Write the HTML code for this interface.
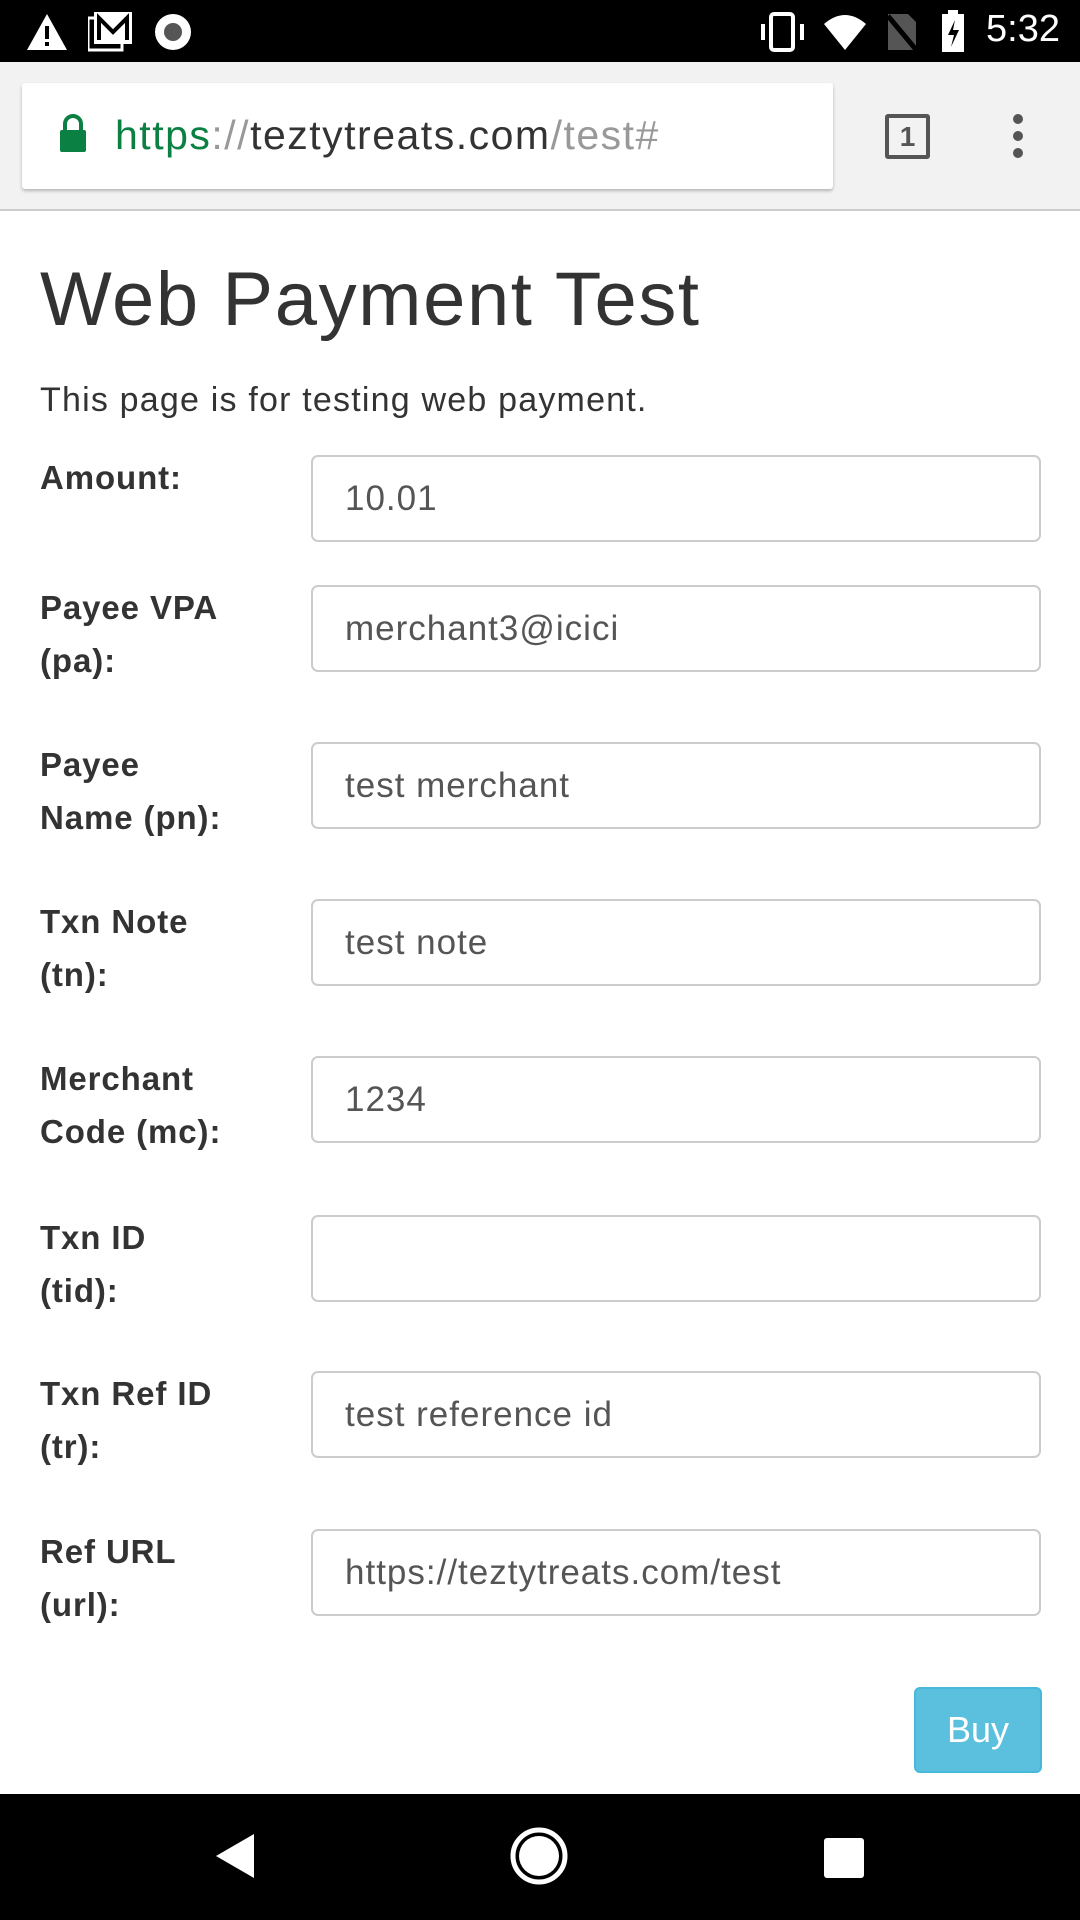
<!DOCTYPE html>
<html><head><meta charset="utf-8"><style>
*{margin:0;padding:0;box-sizing:border-box}
body{width:1080px;height:1920px;background:#fff;font-family:"Liberation Sans",sans-serif;position:relative;overflow:hidden;color:#333}
.abs{position:absolute}
.sb{left:0;top:0;width:1080px;height:62px;background:#000}
.tb{left:0;top:62px;width:1080px;height:149px;background:#f2f2f2;border-bottom:2px solid #ccc}
.url{left:22px;top:83px;width:811px;height:106px;background:#fff;border-radius:3px;box-shadow:0 2px 3px rgba(0,0,0,.25)}
.urltext{left:115px;top:112px;font-size:41px;color:#333;letter-spacing:1.5px}
h1{position:absolute;left:40px;top:256px;font-size:76px;font-weight:normal;color:#333;letter-spacing:1.6px}
.desc{left:40px;top:381px;font-size:34px;letter-spacing:1.2px}
.lab{left:40px;font-size:33px;font-weight:bold;line-height:53px;color:#333;letter-spacing:0.9px}
.inp{left:311px;width:730px;height:87px;border:2px solid #ccc;border-radius:7px;font-size:35px;color:#555;padding-left:32px;line-height:83px;letter-spacing:1px}
.buy{left:914px;top:1687px;width:128px;height:86px;background:#5bc0de;border:2px solid #46b8da;border-radius:6px;color:#fff;font-size:36px;text-align:center;line-height:82px}
.nav{left:0;top:1794px;width:1080px;height:126px;background:#000}
</style></head><body>
<div class="abs sb">
<svg class="abs" style="left:26px;top:12px" width="42" height="40"><polygon points="21,2 41,38 1,38" fill="#fff"/><rect x="19" y="14" width="4" height="13" fill="#000"/><rect x="19" y="30" width="4" height="4" fill="#000"/></svg>
<svg class="abs" style="left:88px;top:10px" width="46" height="42"><rect x="0" y="8" width="34" height="32" fill="none" stroke="#fff" stroke-width="3"/><rect x="6" y="2" width="38" height="32" fill="#fff"/><path d="M11 30V8l14 14 14-14v22" fill="none" stroke="#000" stroke-width="4"/></svg>
<svg class="abs" style="left:153px;top:12px" width="40" height="40"><circle cx="20" cy="20" r="18" fill="#fff"/><circle cx="20" cy="20" r="9" fill="#555"/></svg>
<svg class="abs" style="left:758px;top:12px" width="50" height="40"><rect x="13" y="2" width="22" height="36" rx="3" fill="none" stroke="#fff" stroke-width="4"/><rect x="3" y="12" width="4" height="16" fill="#fff"/><rect x="42" y="12" width="4" height="16" fill="#fff"/></svg>
<svg class="abs" style="left:822px;top:12px" width="46" height="40"><path d="M2 12Q23-6 44 12L23 38Z" fill="#fff"/></svg>
<svg class="abs" style="left:884px;top:12px" width="36" height="40"><path d="M4 2H24L32 10V38H4Z" fill="#555"/><line x1="4" y1="4" x2="34" y2="40" stroke="#000" stroke-width="5"/></svg>
<svg class="abs" style="left:940px;top:10px" width="26" height="44"><rect x="8" y="0" width="10" height="5" fill="#fff"/><rect x="2" y="4" width="22" height="38" fill="#fff"/><path d="M15 10L8 25h6l-3 12 8-17h-6z" fill="#000"/></svg>
<div class="abs" style="left:986px;top:8px;color:#fff;font-size:38px">5:32</div>
</div>
<div class="abs tb"></div>
<div class="abs url"></div>
<svg class="abs" style="left:58px;top:113px" width="30" height="40"><path d="M7 17V11a8 8 0 0 1 16 0v6" fill="none" stroke="#0b8043" stroke-width="4"/><rect x="2" y="17" width="26" height="22" rx="2" fill="#0b8043"/></svg>
<div class="abs urltext"><span style="color:#0b8043">https</span><span style="color:#999">://</span>teztytreats.com<span style="color:#999">/test#</span></div>
<div class="abs" style="left:885px;top:114px;width:45px;height:45px;border:4px solid #555;border-radius:3px;font-size:28px;font-weight:bold;color:#555;text-align:center;line-height:37px">1</div>
<svg class="abs" style="left:1008px;top:112px" width="20" height="50"><circle cx="10" cy="7" r="5" fill="#555"/><circle cx="10" cy="24" r="5" fill="#555"/><circle cx="10" cy="41" r="5" fill="#555"/></svg>
<h1>Web Payment Test</h1>
<div class="abs desc">This page is for testing web payment.</div>

<div class="abs lab" style="top:451px">Amount:</div>
<div class="abs inp" style="top:455px">10.01</div>
<div class="abs lab" style="top:581px">Payee VPA<br>(pa):</div>
<div class="abs inp" style="top:585px">merchant3@icici</div>
<div class="abs lab" style="top:738px">Payee<br>Name (pn):</div>
<div class="abs inp" style="top:742px">test merchant</div>
<div class="abs lab" style="top:895px">Txn Note<br>(tn):</div>
<div class="abs inp" style="top:899px">test note</div>
<div class="abs lab" style="top:1052px">Merchant<br>Code (mc):</div>
<div class="abs inp" style="top:1056px">1234</div>
<div class="abs lab" style="top:1211px">Txn ID<br>(tid):</div>
<div class="abs inp" style="top:1215px"></div>
<div class="abs lab" style="top:1367px">Txn Ref ID<br>(tr):</div>
<div class="abs inp" style="top:1371px">test reference id</div>
<div class="abs lab" style="top:1525px">Ref URL<br>(url):</div>
<div class="abs inp" style="top:1529px">https://teztytreats.com/test</div>
<div class="abs buy">Buy</div>

<div class="abs nav">
<svg class="abs" style="left:214px;top:38px" width="42" height="48"><polygon points="40,2 40,46 2,24" fill="#fff"/></svg>
<svg class="abs" style="left:509px;top:32px" width="60" height="60"><circle cx="30" cy="30" r="26" fill="none" stroke="#fff" stroke-width="5"/><circle cx="30" cy="30" r="20" fill="#fff"/></svg>
<div class="abs" style="left:824px;top:44px;width:40px;height:40px;background:#fff;border-radius:3px"></div>
</div>
</body></html>
